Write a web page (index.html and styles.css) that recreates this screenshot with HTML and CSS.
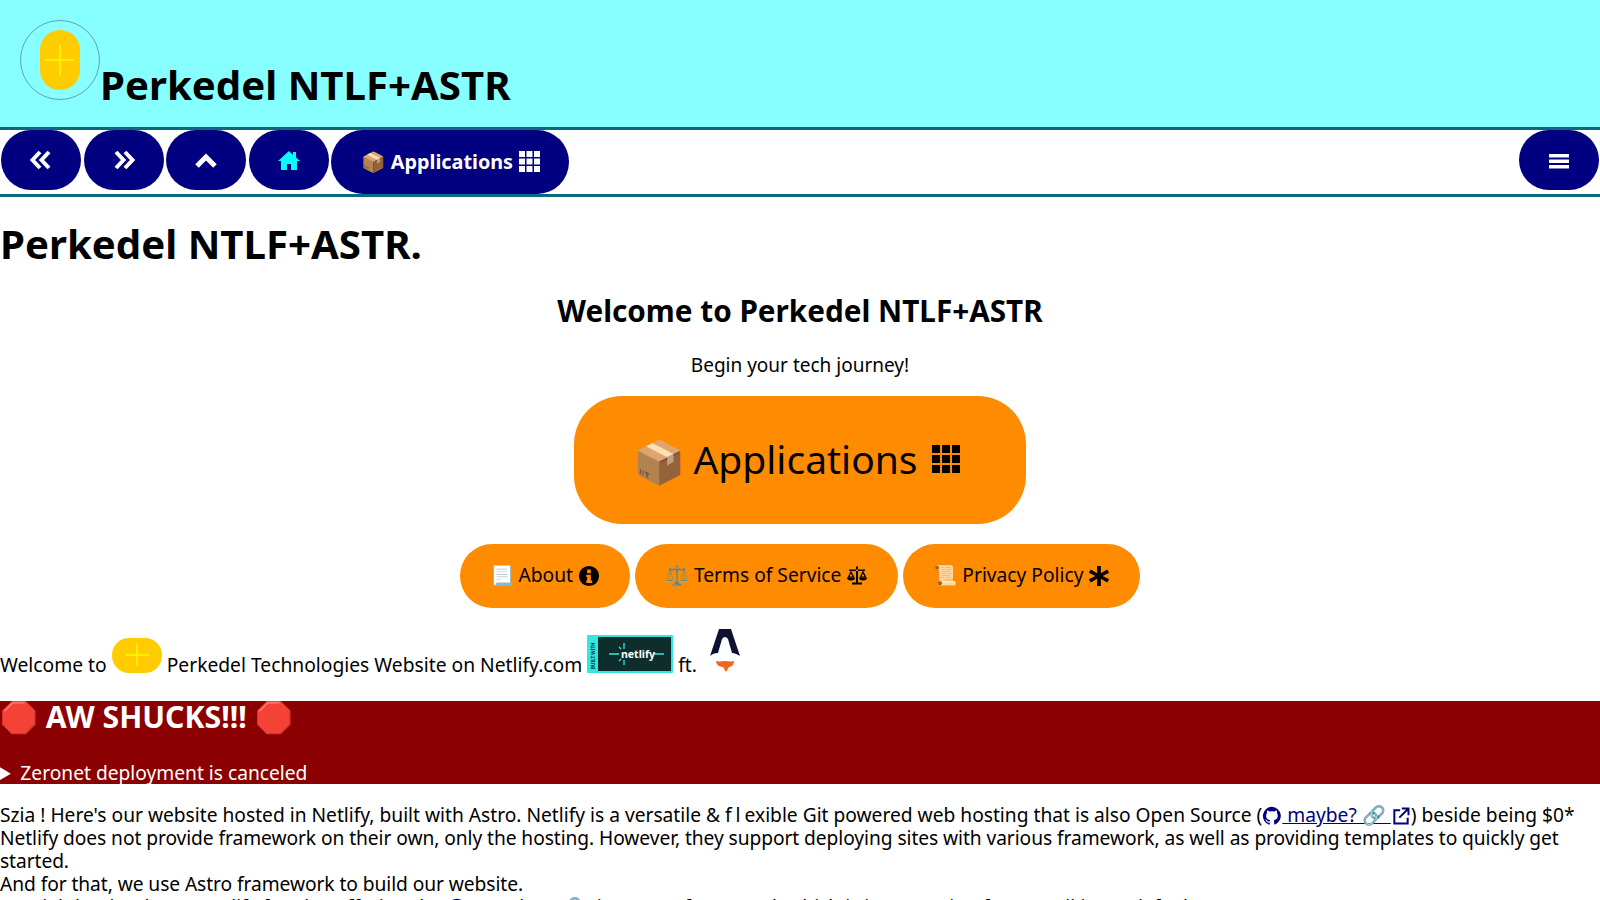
FILE: index.html
```html
<!DOCTYPE html>
<html lang="en">
<head>
    <meta charset="UTF-8">
    <meta name="viewport" content="width=device-width, initial-scale=1.0">
    <title>Perkedel NTLF+ASTR</title>
    <link rel="stylesheet" href="styles.css">
</head>
<body>
    <header class="site-header">
        <svg class="site-logo" viewBox="0 0 80 80">
            <circle cx="40" cy="40" r="39.5" fill="none" stroke="#5aa5ad" stroke-width="1"/>
            <rect x="20" y="10" width="40" height="60" rx="20" fill="#ffcc00"/>
            <path d="M40 25V55M25 40H54" stroke="#ffee00" stroke-width="2" fill="none"/>
        </svg>
        <span class="site-title">Perkedel NTLF+ASTR</span>
    </header>

    <nav class="topnav">
        <a class="nav-btn"><svg class="ic" viewBox="0 0 24 24"><path d="M11 4 3.500 12l7.500 8M20 4l-7.500 8 7.500 8" fill="none" stroke="#fff" stroke-width="4"/></svg></a>
        <a class="nav-btn"><svg class="ic" viewBox="0 0 24 24"><path d="m4 4 7.500 8L4 20M13 4l7.500 8-7.500 8" fill="none" stroke="#fff" stroke-width="4"/></svg></a>
        <a class="nav-btn"><svg class="ic ic-up" viewBox="0 0 24 24"><path d="M3 18 12 9l9 9" fill="none" stroke="#fff" stroke-width="5"/></svg></a>
        <a class="nav-btn"><svg class="ic" viewBox="0 0 24 24"><path d="M12 3 1 13h3v9h6v-6h4v6h6v-9h3l-4-3.600V4h-3v3z" fill="#00ffff"/></svg></a>
        <a class="nav-btn nav-apps">📦 Applications <svg class="grid-ic" viewBox="0 0 21 21"><path d="M0 0h6v6H0zM7.500 0h6v6h-6zM15 0h6v6h-6zM0 7.500h6v6H0zM7.500 7.500h6v6h-6zM15 7.500h6v6h-6zM0 15h6v6H0zM7.500 15h6v6h-6zM15 15h6v6h-6z" fill="#fff"/></svg></a>
        <a class="nav-btn nav-menu"><svg class="ic" viewBox="0 0 24 24"><path d="M2 6h20v3.500H2zM2 11.500h20V15H2zM2 17h20v3.500H2z" fill="#fff"/></svg></a>
    </nav>

    <main>
        <h1>Perkedel NTLF+ASTR.</h1>

        <section class="hero">
            <h2>Welcome to Perkedel NTLF+ASTR</h2>
            <p>Begin your tech journey!</p>
            <a class="big-btn"><span class="big-emoji">📦</span> Applications <svg class="grid-ic" viewBox="0 0 21 21"><path d="M0 0h6v6H0zM7.500 0h6v6h-6zM15 0h6v6h-6zM0 7.500h6v6H0zM7.500 7.500h6v6h-6zM15 7.500h6v6h-6zM0 15h6v6H0zM7.500 15h6v6h-6zM15 15h6v6h-6z" fill="#000"/></svg></a>
            <div class="small-btns">
                <a class="small-btn">📃 About <svg class="sm-ic" viewBox="0 0 24 24"><path fill-rule="evenodd" d="M12 1a11 11 0 1 0 0 22 11 11 0 0 0 0-22zM10 5h4v4h-4zM9 10.500h5V17h1.500v2.500h-6.500V17H10v-4H9z"/></svg></a>
                <a class="small-btn">⚖️ Terms of Service <svg class="sm-ic" viewBox="1 2 22 21"><path d="M11 3h2v16h4v2H7v-2h4zM4 6h16v1.600H4zM6 7 2.500 14h7zM6 10l-1.500 3h3zM18 7l-3.500 7h7zM18 10l-1.500 3h3z" fill-rule="evenodd"/><path d="M2 14a4 3 0 0 0 8 0zM14 14a4 3 0 0 0 8 0z"/></svg></a>
                <a class="small-btn">📜 Privacy Policy <svg class="sm-ic" viewBox="0 0 24 24"><path d="M10 1h4v8l7-4 2 3.500-7 3.500 7 3.500-2 3.500-7-4v8h-4v-8l-7 4-2-3.500L8 12 1 8.500 3 5l7 4z"/></svg></a>
            </div>
        </section>

        <p class="welcome">Welcome to
            <svg class="mini-logo" viewBox="0 0 50 36">
                <rect x="0" y="0" width="50" height="35" rx="17" fill="#ffcc00"/>
                <path d="M25 6V28M13 17H37" stroke="#ffee00" stroke-width="2" fill="none"/>
            </svg>
            Perkedel Technologies Website on Netlify.com
            <svg class="netlify-badge" viewBox="0 0 86 38">
                <rect width="86" height="38" rx="1" fill="#32e6e2"/>
                <rect x="11" y="2" width="73" height="34" fill="#0e2e2e"/>
                <path d="M22 19h10M67 19h10M37 8v6M37 25v5M32 12l2 2M32 26l2-2" stroke="#32e6e2" stroke-width="1.300" fill="none"/>
                <text x="34" y="22.500" class="badge-text">netlify</text>
                <text x="7.800" y="34" class="badge-side" transform="rotate(-90 7.800 34)">BUILT WITH</text>
            </svg>
            ft.
            <svg class="astro-logo" viewBox="0 0 32 44">
                <path d="M10 1h12l9 27c-3-2-6-3-8-3l-4-14q-3-4-6 0l-4 14c-3 0-6 1-8 3z" fill="#0f1130"/>
                <path d="M7 33c3 1 6 0 9 0s6 1 9 0c0 3-2 6-5 6l-3 5-3-5c-4 0-7-3-7-6z" fill="#f2641d"/>
            </svg>
        </p>

        <section class="alert">
            <h2 class="alert-title">🛑 AW SHUCKS!!! 🛑</h2>
            <details>
                <summary>Zeronet deployment is canceled</summary>
            </details>
        </section>

        <p class="story">
            Szia ! Here's our website hosted in Netlify, built with Astro. Netlify is a versatile &amp; <span class="wide-fl">fl</span>exible Git powered web hosting that is also Open Source (<a class="story-link" href="#"><svg class="gh-ic" viewBox="0 0 24 24"><path fill="#000080" d="M12 1a11 11 0 0 0-3.500 21.400c.5.100.8-.2.800-.5v-2c-3 .7-3.700-1.300-3.700-1.300-.5-1.200-1.200-1.600-1.200-1.600-1-.7 0-.7 0-.7 1.100.1 1.700 1.100 1.700 1.100 1 1.700 2.600 1.200 3.200.9.100-.7.400-1.200.700-1.500-2.400-.3-5-1.200-5-5.400 0-1.200.4-2.200 1.100-3-.1-.3-.5-1.400.1-2.900 0 0 .9-.3 3 1.100a10 10 0 0 1 5.500 0c2.100-1.400 3-1.100 3-1.100.6 1.500.2 2.600.1 2.900.7.800 1.100 1.800 1.100 3 0 4.200-2.600 5.100-5 5.400.4.300.7 1 .7 2v3c0 .3.300.6.800.5A11 11 0 0 0 12 1z"/></svg> maybe? 🔗 <svg class="ext-ic" viewBox="0 0 24 24"><path d="M11 5H4v16h16v-7M13 3h8v8M21 3 10 14" fill="none" stroke="#000080" stroke-width="2.400"/></svg></a>) beside being $0*<br>
            <span class="tight">Netlify does not provide framework on their own, only the hosting. However, they support deploying sites with various framework, as well as providing templates to quickly get started.<br>
            And for that, we use Astro framework to build our website.</span><br>
            Special thanks also to Netlify for also offering the <a class="story-link" href="#"><svg class="gh-ic" viewBox="0 0 24 24"><circle cx="12" cy="12" r="11" fill="#000080"/></svg> template 🔗</a> Figure out framework which is in our action for our wiki as a default.
        </p>
    </main>
</body>
</html>
```

FILE: styles.css
```css
html {
    overflow: hidden;
}
body {
    font-family: "Noto Sans", "Open Sans", sans-serif;
    margin: 0;
    color: #000;
    background-color: #fff;
    font-size: 19.2px;
}
.site-header {
    background-color: #88ffff;
    height: 130px;
    padding-left: 20px;
    padding-top: 20px;
    display: flex;
    align-items: flex-start;
    box-sizing: border-box;
    border-bottom: 3px solid #0a6a80;
}
.site-logo {
    width: 80px;
    height: 80px;
    flex: none;
}
.site-title {
    font-size: 40.200px;
    font-weight: 700;
    line-height: 52px;
    margin-top: 39px;
}
.topnav {
    display: flex;
    align-items: flex-start;
    gap: 2.600px;
    padding-left: 1px;
    padding-right: 1px;
    height: 64px;
    border-bottom: 3px solid #0a6a80;
}
.nav-btn {
    width: 80px;
    height: 60px;
    border-radius: 30px;
    background-color: #000080;
    color: #fff;
    display: flex;
    align-items: center;
    justify-content: center;
    font-weight: 700;
    flex: none;
}
.nav-apps {
    width: 238px;
    height: 64px;
    box-sizing: border-box;
    padding-bottom: 2px;
    border-radius: 32px;
    gap: 6px;
    font-size: 19.800px;
}
.nav-menu {
    margin-left: auto;
}
.ic {
    width: 24px;
    height: 24px;
}
.grid-ic {
    width: 21px;
    height: 21px;
}
main h1 {
    font-size: 40.200px;
    line-height: 52px;
    font-weight: 700;
    margin: 21px 0 0;
}
.hero {
    text-align: center;
}
.hero h2 {
    font-size: 29.700px;
    line-height: 38px;
    margin: 22px 0 0;
}
.hero p {
    font-size: 19px;
    line-height: 26px;
    margin: 22px 0 0;
}
.big-btn {
    display: inline-flex;
    align-items: center;
    justify-content: center;
    gap: 12px;
    width: 452px;
    height: 128px;
    box-sizing: border-box;
    padding: 0 7px 4px 0;
    border-radius: 48px;
    background-color: #ff8c00;
    font-size: 39px;
    margin-top: 18px;
}
.big-emoji {
    font-size: 42px;
    margin-top: 4px;
    margin-right: -4px;
}
.big-btn .grid-ic {
    width: 28px;
    height: 28px;
    margin-top: 2px;
    margin-left: 2px;
}
.small-btns {
    display: flex;
    justify-content: center;
    gap: 5px;
    margin-top: 20px;
}
.small-btn {
    height: 64px;
    box-sizing: border-box;
    padding: 0 30px 4px;
    border-radius: 32px;
    background-color: #ff8c00;
    display: flex;
    align-items: center;
    gap: 5px;
}
.sm-ic {
    width: 22px;
    height: 22px;
    margin-top: 4px;
}
.welcome {
    margin: 20px 0 0;
    height: 73px;
    display: flex;
    align-items: flex-end;
    gap: 5px;
    padding-bottom: 23px;
    box-sizing: border-box;
    font-size: 19.250px;
    line-height: 26px;
}
.mini-logo {
    width: 50px;
    height: 36px;
    margin-bottom: 4px;
}
.netlify-badge {
    width: 86px;
    height: 38px;
    margin-bottom: 5px;
}
.badge-text {
    font-family: "Noto Sans", sans-serif;
    font-size: 10.500px;
    font-weight: 700;
    fill: #fff;
}
.badge-side {
    font-family: "Noto Sans", sans-serif;
    font-size: 4.500px;
    font-weight: 700;
    fill: #0e2e2e;
}
.astro-logo {
    width: 32px;
    height: 44px;
    margin-left: 7px;
    margin-bottom: 6px;
}
.alert {
    background-color: #8b0000;
    color: #fff;
    height: 83px;
    overflow: hidden;
}
.alert-title {
    font-size: 30.200px;
    line-height: 32px;
    margin: 0;
    font-weight: 700;
}
.alert details {
    margin-top: 27px;
    line-height: 26px;
}
.story {
    margin: 19px 0 0;
    line-height: 23px;
}
.story-link {
    color: #000080;
}
.wide-fl {
    letter-spacing: 4px;
}
.tight {
    letter-spacing: -0.070px;
}
.gh-ic, .ext-ic {
    width: 20px;
    height: 20px;
    vertical-align: -4px;
}
```
